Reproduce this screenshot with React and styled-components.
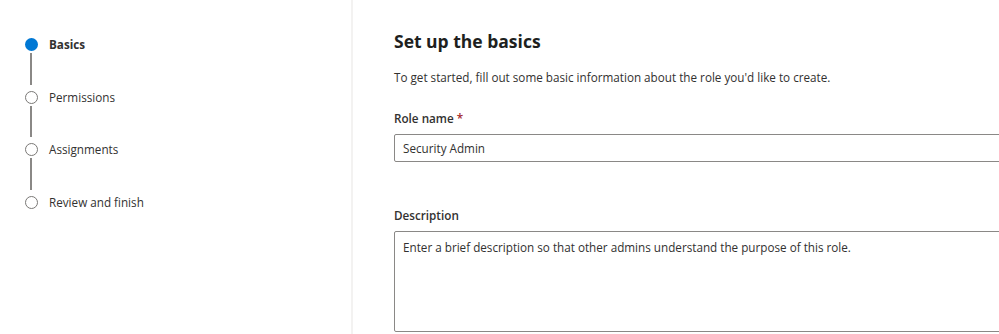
import React from 'react'
import styled, { createGlobalStyle } from 'styled-components'

const GlobalStyle = createGlobalStyle`
  html, body {
    margin: 0;
    padding: 0;
    background: #fff;
  }
  body {
    font-family: "Open Sans", "Noto Sans", sans-serif;
    color: #323130;
  }
`

const steps = [
    { label: 'Basics', active: true },
    { label: 'Permissions' },
    { label: 'Assignments' },
    { label: 'Review and finish' },
]

const App = () => {
    return (
        <Page>
            <GlobalStyle />
            <Sidebar>
                {steps.map((step, i) => (
                    <Step key={step.label}>
                        <Track>
                            <Dot $active={step.active} />
                            {i < steps.length - 1 && <Connector />}
                        </Track>
                        <StepLabel $active={step.active}>{step.label}</StepLabel>
                    </Step>
                ))}
            </Sidebar>
            <Main>
                <Title>Set up the basics</Title>
                <Intro>To get started, fill out some basic information about the role you'd like to create.</Intro>
                <Field>
                    <Label>Role name <Required>*</Required></Label>
                    <TextInput defaultValue="Security Admin" />
                </Field>
                <Field $gap={44}>
                    <Label>Description</Label>
                    <TextArea placeholder="Enter a brief description so that other admins understand the purpose of this role." />
                </Field>
            </Main>
        </Page>
    )
}

export default App


const Page = styled.div`
    display: flex;
    width: 999px;
    height: 334px;
    overflow: hidden;
`

const Sidebar = styled.nav`
    width: 353px;
    flex-shrink: 0;
    border-right: 2px solid #f3f2f1;
    padding: 38px 0 0 24px;
    box-sizing: border-box;
    display: flex;
    flex-direction: column;
`

const Step = styled.div`
    display: flex;
    align-items: flex-start;
`

const Track = styled.div`
    width: 14px;
    display: flex;
    flex-direction: column;
    align-items: center;
`

const Dot = styled.div`
    width: 13px;
    height: 13px;
    border-radius: 50%;
    box-sizing: border-box;
    background: ${p => (p.$active ? '#0078d4' : '#fff')};
    border: ${p => (p.$active ? 'none' : '1.8px solid #7a7876')};
`

const Connector = styled.div`
    width: 1.5px;
    height: 31.7px;
    margin: 2px 0 6px;
    background: #8a8886;
`

const StepLabel = styled.span`
    margin-left: 11px;
    font-size: 11.7px;
    line-height: 13px;
    font-weight: ${p => (p.$active ? 700 : 400)};
    color: #323130;
`

const Main = styled.main`
    flex: 1;
    padding: 29px 0 0 41px;
    min-width: 0;
`

const Title = styled.h1`
    margin: 0;
    font-size: 17.5px;
    line-height: 24px;
    font-weight: 700;
    color: #201f1e;
`

const Intro = styled.p`
    margin: 15px 0 0;
    font-size: 11.7px;
    line-height: 18px;
`

const Field = styled.div`
    margin-top: ${p => p.$gap || 23}px;
    display: flex;
    flex-direction: column;
`

const Label = styled.label`
    font-size: 11.7px;
    font-weight: 600;
    line-height: 18px;
    color: #323130;
    margin-bottom: 7px;
`

const Required = styled.span`
    color: #a4262c;
`

const TextInput = styled.input`
    box-sizing: border-box;
    width: 640px;
    height: 28px;
    padding: 0 8px;
    border: 1px solid #8a8886;
    border-radius: 2px;
    font-family: inherit;
    font-size: 11.7px;
    color: #323130;
    outline: none;
`

const TextArea = styled.textarea`
    box-sizing: border-box;
    width: 640px;
    height: 101px;
    padding: 6px 8px;
    border: 1px solid #8a8886;
    border-radius: 2px;
    font-family: inherit;
    font-size: 11.7px;
    line-height: 18px;
    resize: none;
    outline: none;

    &::placeholder {
        color: #323130;
        opacity: 1;
    }
`
